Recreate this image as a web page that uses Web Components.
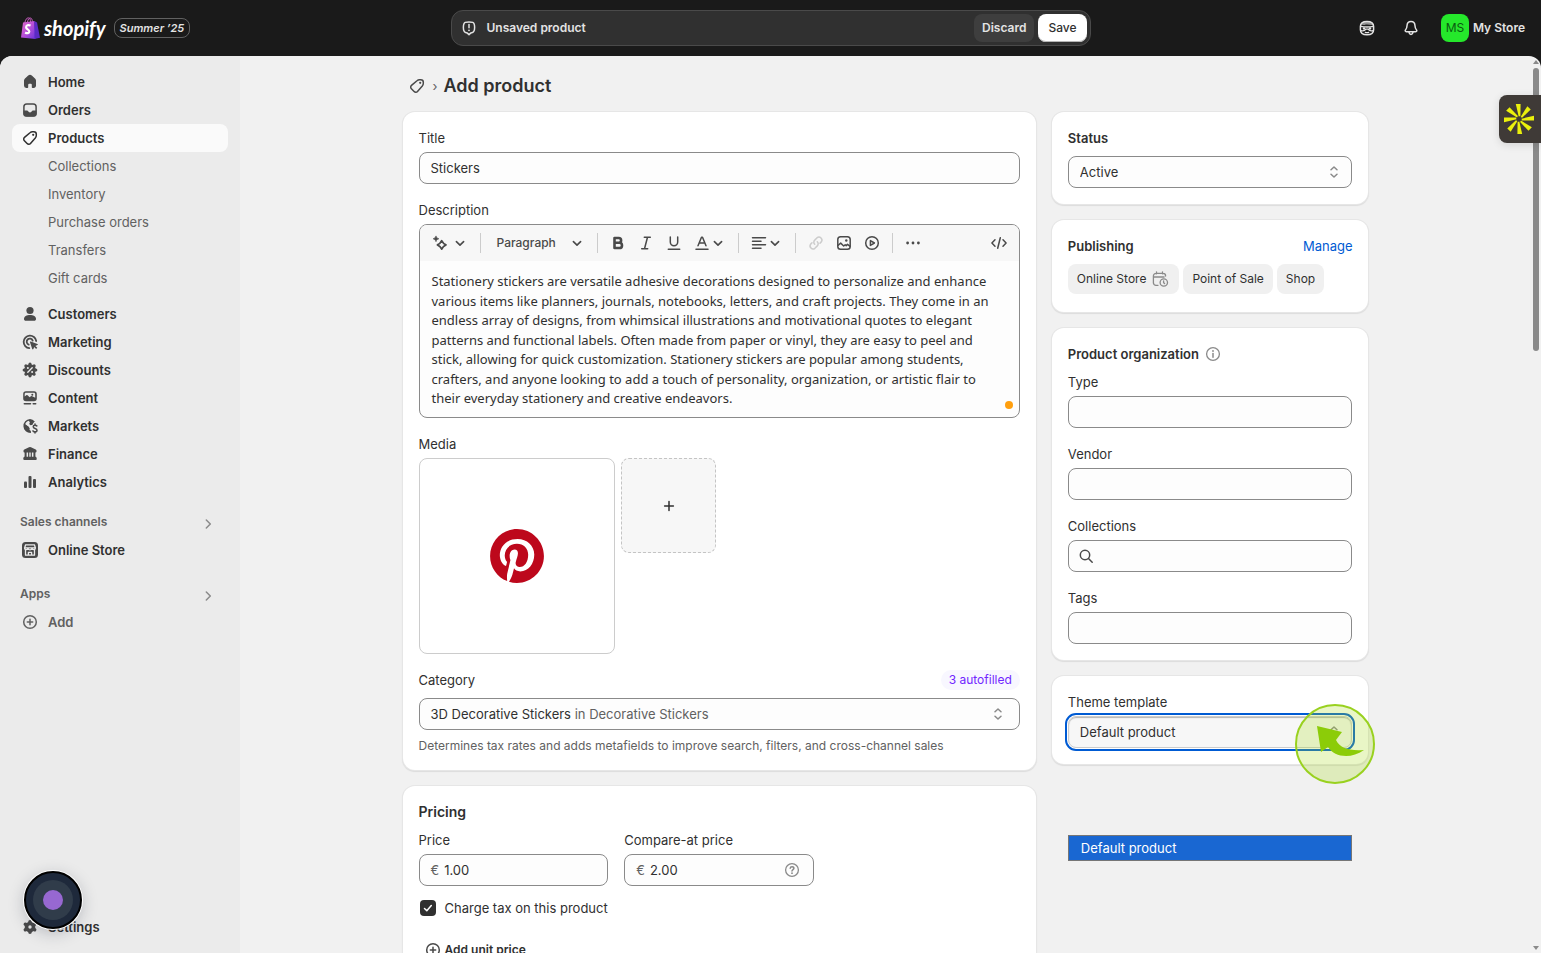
<!DOCTYPE html>
<html lang="en">
<head>
<meta charset="utf-8">
<meta name="viewport" content="width=device-width, initial-scale=1">
<title>Add product</title>
<style>
html, body {
  height: 100%;
}
body {
  margin: 0;
  overflow: hidden;
  background: #1a1a1a;
  color: #303030;
  font: 400 13px/20px Inter, "Liberation Sans", sans-serif;
}
</style>
</head>
<body>
<admin-app></admin-app>

<script>
const RESET = `
*, *::before, *::after { box-sizing: border-box; }
button, input, select, textarea { font: inherit; color: inherit; margin: 0; }
button { border: 0; padding: 0; background: none; cursor: pointer; }
a { color: inherit; text-decoration: none; }
h1, h2 { margin: 0; font: inherit; }
`

const S = 'fill="none" stroke="currentColor" stroke-width="1.5" stroke-linecap="round" stroke-linejoin="round"'
const THIN = S.replace("1.5", "1.3")

// all on a 20 x 20 grid
const ICONS = {
    home: `<path d="M8.2 3.6a2.7 2.7 0 0 1 3.6 0l3.2 2.9c.6.5 1 1.3 1 2.1v5c0 1.4-1 2.4-2.3 2.4h-1.2a.7.7 0 0 1-.7-.7v-2.6a1 1 0 0 0-1-1H9.2a1 1 0 0 0-1 1v2.6a.7.7 0 0 1-.7.7H6.3A2.3 2.3 0 0 1 4 13.6v-5c0-.8.4-1.6 1-2.1z"/>`,
    orders: `<rect x="3.9" y="3.9" width="12.2" height="12.2" rx="2.8" ${S}/><path d="M3.5 10.5h3.6c.4 0 .7.2.9.6a2.2 2.2 0 0 0 4 0c.2-.4.5-.6.9-.6h3.6v3.5a2.5 2.5 0 0 1-2.5 2.5H6A2.5 2.5 0 0 1 3.5 14z"/>`,
    tag: `<path ${S} d="M10.3 4.500c.6-.6 1.300-.8 2.100-.8h1.400c1.400 0 2.500 1.100 2.500 2.500v1.400c0 .8-.3 1.500-.8 2.100l-5 5.700a2.300 2.300 0 0 1-3.400.1L4.400 12.800a2.300 2.300 0 0 1 .1-3.400z"/><circle cx="13.2" cy="6.800" r="1.1"/>`,
    customers: `<circle cx="10" cy="6.500" r="3.600"/><path d="M4 15c0-2.500 2.700-3.900 6-3.900s6 1.400 6 3.900c0 1-.8 1.800-1.800 1.800H5.800C4.800 16.800 4 16 4 15z"/>`,
    marketing: `<g stroke-width="1.8" fill="none" stroke="currentColor" stroke-linecap="round"><path d="M16.200 9A6.300 6.300 0 1 0 9.300 16.200"/><path d="M12.700 8.600a3.100 3.100 0 1 0-4 4"/></g><path d="M10 10.300c-.2-.5.3-1 .8-.8l6.600 2.400c.6.200.6 1 0 1.200l-2 .8 1.900 1.900-1.200 1.200-1.900-1.900-.8 2c-.2.600-1 .6-1.200 0z"/>`,
    discounts: `<circle cx="10" cy="10" r="5.800"/><path fill="none" stroke="currentColor" stroke-width="3.200" stroke-linecap="round" d="M10 4.200v11.600M4.200 10h11.600M5.900 5.900l8.200 8.200M14.100 5.900l-8.200 8.200"/><path stroke="#ebebeb" stroke-width="1.400" stroke-linecap="round" d="m7.800 12.200 4.400-4.400"/><circle cx="7.900" cy="8.100" r="1" fill="#ebebeb"/><circle cx="12.100" cy="11.900" r="1" fill="#ebebeb"/>`,
    content: `<path fill-rule="evenodd" d="M6 3.200h8A2.800 2.800 0 0 1 16.800 6v4.500a2.800 2.800 0 0 1-2.800 2.800H6a2.800 2.800 0 0 1-2.800-2.800V6A2.800 2.800 0 0 1 6 3.200zm0 1.500c-.8 0-1.300.6-1.300 1.300v2.600l1.500-1.300a1 1 0 0 1 1.400 0l2 2 1.300-1.100a1 1 0 0 1 1.300 0l3 1.500V6c0-.7-.5-1.300-1.200-1.300z"/><circle cx="12.300" cy="6.700" r="1"/><path ${S} d="M4.300 15.800h6.200M13.200 15.800h2.500"/>`,
    markets: `<path d="M10 3a7 7 0 1 0 .9 14v-2.300c-1.300-.2-1.800-1.500-1.100-2.500L8.200 10.500 5.200 8.300C5.700 6.500 7 5.200 8.700 4.700l1.200 1.600-.7 1.700 1.300 1.300 2-.6.5-2.200 1.600-1A7 7 0 0 0 10 3z"/><path d="m4.500 8 4.400 3-.2 3.500-1.300 1.200-3-2.700z"/><path d="m11 4 3.700 1.200-2.300 3-2 .5z"/><path ${S} d="M16.800 9.900c-.5-.5-1.100-.7-1.800-.7-1 0-1.800.6-1.800 1.600 0 2.300 3.800 1.100 3.800 3.400 0 1-.8 1.600-1.900 1.600-.8 0-1.600-.3-2.100-.9M15 8v1M15 16v1"/>`,
    finance: `<path d="M9 3.300a2 2 0 0 1 2 0l4.700 2.200c.5.300.8.700.8 1.200v.9c0 .5-.4.900-.9.900H4.400a.9.900 0 0 1-.9-.9v-.9c0-.5.300-1 .8-1.200z"/><path d="M4.600 8h2v5.500h-2zM8.100 8h1.200v5.500H8.100zM10.700 8h1.200v5.500h-1.200zM13.400 8h2v5.500h-2z"/><path d="M4.700 12.800h10.600c.8 0 1.400.7 1.400 1.500v.7c0 .6-.4 1-1 1H4.300a1 1 0 0 1-1-1v-.7c0-.8.6-1.500 1.400-1.500z"/>`,
    analytics: `<rect x="4" y="9.500" width="3" height="6.500" rx="1"/><rect x="8.500" y="4" width="3" height="12" rx="1"/><rect x="13" y="7" width="3" height="9" rx="1"/>`,
    store: `<rect x="2" y="2" width="16" height="16" rx="3.500"/><g fill="none" stroke="#ebebeb" stroke-width="1.300" stroke-linejoin="round"><path d="M5.600 4.800h8.800l1 3.200c0 1-.7 1.700-1.600 1.700S12 9.200 12 8.300c0 .9-1 1.500-2 1.500s-2-.6-2-1.500c0 .9-.8 1.400-1.800 1.400S4.600 9 4.600 8zM5.500 9.900v5.300h9V9.900M8.400 15v-2.600h3.200V15M4.800 7.800h10.400"/></g>`,
    plusCircle: `<circle cx="10" cy="10" r="6.300" ${S}/><path ${S} d="M10 7.300v5.400M7.300 10h5.400"/>`,
    settings: `<circle cx="10" cy="10" r="3.500" fill="none" stroke="currentColor" stroke-width="3.600"/><path fill="none" stroke="currentColor" stroke-width="3.600" stroke-linecap="round" d="M10 5.800V4.700M10 14.200v1.100M6.400 7.900l-1-.6M13.600 12.100l1 .6M13.600 7.900l1-.6M6.400 12.100l-1 .6"/>`,
    chevronRight: `<path ${S} d="m8.300 6 4 4-4 4"/>`,
    chevronDown: `<path ${S} d="m5.500 8.300 4.500 4.400 4.500-4.400" style="stroke-width:2"/>`,
    updown: `<path ${S} d="M7 7.800 10 5l3 2.800M7 12.200l3 2.800 3-2.800"/>`,
    alert: `<path ${S} d="M6.200 4.400c1-.5 6.600-.5 7.600 0 2.400 1.200 2.600 9.200-.4 10.200l-1.500.3L10 16.600l-1.900-1.700-1.500-.3C3.600 13.600 3.800 5.600 6.200 4.400z"/><path ${S} d="M10 6.600v3.200"/><circle cx="10" cy="12.300" r=".9"/>`,
    sidekick: `<path ${S} d="M3.400 8.500c0-3.200 2.800-5 6.600-5s6.600 1.800 6.600 5v3.200c0 3.300-3 5-6.600 5s-6.600-1.700-6.600-5z"/><path d="M3.600 6.500C5 4 7.300 3.300 10 3.300s5 .7 6.400 3.200c-2 1.100-4.100 0-6.400 0-1.800 0-2 .5-3.300.5z" opacity=".6"/><path ${THIN} d="M3.600 8.300c4.200.9 8.600.9 12.800 0M4 12.600c2 .6 4-.2 4.800-1.500h2.400c.8 1.300 2.800 2.100 4.800 1.500M8.300 14.300c1.100.4 2.300.4 3.400 0"/><circle cx="7" cy="10.400" r="1.200"/><circle cx="13" cy="10.400" r="1.200"/>`,
    bell: `<path ${S} d="M10 3.600c-2.400 0-3.900 1.900-4 4.100-.1 2-.4 3-1.400 4-.8.9-.4 2 .7 2h9.400c1.100 0 1.500-1.100.7-2-1-1-1.300-2-1.400-4-.1-2.200-1.600-4.100-4-4.100z"/><path ${S} d="M8 14c.2 1.500.9 2.400 2 2.400s1.800-.9 2-2.400"/>`,
    magic: `<path ${S} d="M11.700 7.700c.9 2 2.200 3.300 4.300 4.200-2.100.9-3.400 2.200-4.300 4.300-.9-2.100-2.200-3.400-4.300-4.300 2.100-.9 3.400-2.200 4.300-4.200z" style="stroke-width:1.700"/><path d="M6 2.900c.4 1.600 1.200 2.400 2.900 2.900C7.200 6.300 6.400 7.100 6 8.700c-.5-1.600-1.300-2.400-2.900-2.900C4.700 5.300 5.500 4.500 6 2.900z" stroke="currentColor" stroke-width=".6" stroke-linejoin="round"/>`,
    bold: `<path fill="none" stroke="currentColor" stroke-width="2.600" stroke-linejoin="round" d="M6.500 5h4.200a2.300 2.300 0 0 1 0 4.800H6.500zM6.500 9.800h4.900a2.600 2.600 0 0 1 0 5.200H6.500z"/>`,
    italic: `<path ${S} d="M8.300 4.300h6M5.700 15.700h6M11.500 4.300l-3 11.400"/>`,
    underline: `<path ${S} d="M6.300 4v5a3.700 3.700 0 0 0 7.400 0V4M4.300 16.200h11.400"/>`,
    textColor: `<path ${S} d="m6 12.800 3.500-8.600h1l3.500 8.600M7.200 10h5.600M4 16.300h12"/>`,
    alignLeft: `<path ${S} d="M3.500 4.800h13M3.500 8.300h8.500M3.500 11.800h13M3.500 15.200h8.500"/>`,
    link: `<path ${S} d="M8.700 11.300a2.900 2.900 0 0 1 0-4.200l2.400-2.400a3 3 0 0 1 4.200 4.200l-1.300 1.300M11.300 8.700a2.900 2.900 0 0 1 0 4.200l-2.400 2.400a3 3 0 0 1-4.200-4.200L6 9.800"/>`,
    image: `<rect x="3.800" y="3.800" width="12.400" height="12.400" rx="2.800" ${S}/><path ${S} d="m4.200 12.300 2.500-2.200 3 2.900 1.500-1.300 1 .9 1.300-1.200 2.300 1.800"/><circle cx="12.300" cy="7.500" r="1.200"/>`,
    play: `<circle cx="10" cy="10" r="6.300" ${S}/><path ${S} d="M8.400 7.600v4.800l4-2.400z"/>`,
    dots: `<circle cx="4.600" cy="10" r="1.400"/><circle cx="10" cy="10" r="1.400"/><circle cx="15.400" cy="10" r="1.400"/>`,
    code: `<path ${S} d="M6 6.800 2.900 10 6 13.200M14 6.800l3.100 3.200-3.100 3.200M11.300 4.700 8.700 15.300"/>`,
    plus: `<path ${S} d="M10 5.600v8.800M5.600 10h8.800"/>`,
    schedule: `<path ${THIN} d="M8 16.300H6a2.600 2.600 0 0 1-2.600-2.600V7A2.600 2.600 0 0 1 6 4.400h7A2.600 2.600 0 0 1 15.600 7M3.600 8h10.500M6.500 2.800v2M12.500 2.800v2"/><circle cx="13.800" cy="13.500" r="3.700" ${THIN}/><path ${THIN} d="M13.600 11.800v2l1 .8"/>`,
    info: `<circle cx="10" cy="10" r="6.400" ${THIN}/><path ${S} d="M10 9.500v3.700"/><circle cx="10" cy="7" r=".9"/>`,
    help: `<circle cx="10" cy="10" r="6.400" ${THIN}/><path ${S} d="M8.200 8.300c.1-1 .8-1.600 1.800-1.600s1.900.7 1.900 1.600c0 1.300-1.700 1.400-1.900 2.700"/><circle cx="10" cy="13.200" r=".9"/>`,
    search: `<circle cx="9" cy="9" r="4.700" ${S}/><path ${S} d="m12.500 12.500 3.700 3.700"/>`
}

function define(name, css, html, setup) {
    customElements.define(name, class extends HTMLElement {
        constructor() {
            super()
            const attr = (key, fallback = "") => this.getAttribute(key) ?? fallback
            const root = this.attachShadow({ mode: "open" })
            root.innerHTML = `<style>${RESET}${css}</style>${typeof html == "function" ? html(attr) : html}`
            if(setup) {
                setup(root, this)
            }
        }
    })
}

// size is in px, default 20
define("ui-icon", `
:host { display: inline-flex; flex: none; }
svg { display: block; fill: currentColor; }
`, attr => {
    const size = attr("size", "20")
    return `<svg width="${size}" height="${size}" viewBox="0 0 20 20" aria-hidden="true">${ICONS[attr("name")]}</svg>`
})

define("brand-logo", `
:host { display: flex; margin-left: 4px; }
a { display: flex; align-items: center; gap: 4px; color: #fff; }
svg { display: block; }
.word { font: italic 700 20px/24px Lato, "Open Sans", sans-serif; }
.edition {
  margin-left: 4px;
  padding: 0 5px;
  border: 1px solid #616161;
  border-radius: 8px;
  color: #e3e3e3;
  font: italic 600 11px/18px Inter, sans-serif;
}
`, `
<a href="#">
  <svg width="20" height="24" viewBox="0 0 20 24" aria-hidden="true">
    <defs>
      <linearGradient id="bag" x1="0" y1="0" x2="1" y2="1">
        <stop offset="0" stop-color="#e06cc8"/><stop offset=".5" stop-color="#b84fd8"/><stop offset="1" stop-color="#6a35dc"/>
      </linearGradient>
    </defs>
    <path d="M4.800 7C5.300 3.600 6.700 1.900 8.300 1.900c1.700 0 2.200 1.700 2.200 4.500M7.500 6c.4-2.600 1.600-4 2.700-4 1.500 0 2.100 1.600 2.200 3.800" fill="none" stroke="#c45bbd" stroke-width="1"/>
    <path d="M3 6.500 14.500 5l1 18L1 21.500z" fill="url(#bag)"/>
    <path d="m14.300 5 2.700 1.500 3 15.300L14.500 23z" fill="#5b2bc4"/>
    <path d="M10.600 9.500c-2.500-1-4.500-.3-4.500 1.700 0 2.300 3.200 2 3.200 4.300 0 1.900-2.200 2.200-4.200 1" fill="none" stroke="#fff" stroke-width="2.200"/>
  </svg>
  <span class="word">shopify</span>
  <span class="edition">Summer ’25</span>
</a>
`)

define("save-bar", `
:host {
  display: flex;
  align-items: center;
  gap: 4px;
  height: 36px;
  padding: 0 3px 0 7px;
  border: 1px solid #4a4a4a;
  border-radius: 12px;
  background: #303030;
  color: #e3e3e3;
  font-size: 12px;
}
.text { flex: 1; margin-left: 4px; font-weight: 600; }
button { height: 28px; padding: 0 8px; border-radius: 8px; font-weight: 600; }
.discard { background: #3e3e3e; }
.save { padding: 0 10px; background: #fff; color: #303030; box-shadow: inset 0 -1px 0 #b5b5b5; font-weight: 500; }
`, `
<ui-icon name="alert"></ui-icon>
<span class="text">Unsaved product</span>
<button class="discard" type="button">Discard</button>
<button class="save" type="button">Save</button>
`)

define("top-bar", `
:host {
  display: grid;
  grid-template-columns: 1fr minmax(0, 640px) 1fr;
  align-items: center;
  height: 56px;
  padding: 0 16px;
  color: #e3e3e3;
  font-size: 12px;
}
.tools { display: flex; align-items: center; justify-content: flex-end; gap: 16px; }
.tools button { display: flex; align-items: center; justify-content: center; width: 28px; height: 28px; }
.tools button.store { width: auto; gap: 4px; font-weight: 600; }
.avatar {
  width: 28px;
  border-radius: 8px;
  background: #25e82b;
  color: #0b5a10;
  font-weight: 400;
  line-height: 28px;
}
`, `
<brand-logo></brand-logo>
<save-bar></save-bar>
<div class="tools">
  <button type="button" aria-label="Sidekick"><ui-icon name="sidekick"></ui-icon></button>
  <button type="button" aria-label="Alerts"><ui-icon name="bell"></ui-icon></button>
  <button type="button" class="store"><span class="avatar">MS</span>My Store</button>
</div>
`)

define("nav-item", `
:host { display: block; }
a {
  display: flex;
  align-items: center;
  gap: 8px;
  height: 28px;
  padding: 0 8px;
  border-radius: 8px;
  font-weight: 600;
}
ui-icon { color: #4a4a4a; }
:host([sub]) a { padding-left: 36px; color: #616161; font-weight: 400; }
:host([muted]) a, :host([muted]) ui-icon { color: #616161; }
:host([active]) a { background: #fafafa; }
:host([active]) ui-icon { color: #303030; }
`, attr => `<a href="#">${attr("icon") ? `<ui-icon name="${attr("icon")}"></ui-icon>` : ""}<slot></slot></a>`)

define("nav-section", `
:host { display: block; }
button {
  display: flex;
  align-items: center;
  justify-content: space-between;
  width: 100%;
  height: 28px;
  padding: 0 10px 0 8px;
  color: #616161;
  font-size: 12px;
  font-weight: 600;
}
ui-icon { padding-top: 4px; color: #8a8a8a; }
`, `<button type="button"><slot></slot><ui-icon name="chevronRight"></ui-icon></button>`)

define("side-nav", `
:host { display: flex; flex-direction: column; justify-content: space-between; padding: 12px; background: #ebebeb; }
nav { display: flex; flex-direction: column; }
.more { margin-top: 8px; }
.channels { margin-top: 12px; }
.apps { margin-top: 16px; }
`, `
<nav aria-label="Main">
  <nav-item icon="home">Home</nav-item>
  <nav-item icon="orders">Orders</nav-item>
  <nav-item icon="tag" active>Products</nav-item>
  <nav-item sub>Collections</nav-item>
  <nav-item sub>Inventory</nav-item>
  <nav-item sub>Purchase orders</nav-item>
  <nav-item sub>Transfers</nav-item>
  <nav-item sub>Gift cards</nav-item>
  <nav-item icon="customers" class="more">Customers</nav-item>
  <nav-item icon="marketing">Marketing</nav-item>
  <nav-item icon="discounts">Discounts</nav-item>
  <nav-item icon="content">Content</nav-item>
  <nav-item icon="markets">Markets</nav-item>
  <nav-item icon="finance">Finance</nav-item>
  <nav-item icon="analytics">Analytics</nav-item>
  <nav-section class="channels">Sales channels</nav-section>
  <nav-item icon="store">Online Store</nav-item>
  <nav-section class="apps">Apps</nav-section>
  <nav-item icon="plusCircle" muted>Add</nav-item>
</nav>
<nav-item icon="settings">Settings</nav-item>
`)

define("page-card", `
:host {
  display: flex;
  flex-direction: column;
  gap: var(--card-gap, 16px);
  padding: 16px;
  border-radius: 12px;
  background: #fff;
  box-shadow: 0 0 0 1px #e6e6e6, 0 1px 1px 1px #dcdcdc;
}
`, `<slot></slot>`)

const FIELD = `
:host { display: flex; flex-direction: column; gap: 4px; min-width: 0; }
.box {
  display: flex;
  align-items: center;
  height: 32px;
  border: 1px solid #8a8a8a;
  border-radius: 8px;
  background: #fdfdfd;
}
`

define("text-field", FIELD + `
.box { gap: 5px; padding: 0 11px; }
input { flex: 1; width: 0; height: 30px; padding: 0; border: 0; outline: 0; background: none; }
.prefix { color: #616161; }
ui-icon { color: #8a8a8a; }
ui-icon.lead { margin-left: -4px; color: #4a4a4a; }
`, attr => `
<label for="field">${attr("label")}</label>
<div class="box">
  ${attr("lead") ? `<ui-icon class="lead" name="${attr("lead")}"></ui-icon>` : ""}
  ${attr("prefix") ? `<span class="prefix">${attr("prefix")}</span>` : ""}
  <input id="field" type="text" value="${attr("value")}" autocomplete="off">
  ${attr("trail") ? `<ui-icon name="${attr("trail")}"></ui-icon>` : ""}
</div>
`)

// label is drawn as a heading when "heading" is set
define("select-field", FIELD + `
:host([heading]) { gap: 8px; }
:host([heading]) label { font-weight: 600; }
:host([open]) .box { background: #f7f7f7; border-color: #cccccc; box-shadow: inset 0 1px 1px #b5b5b5; outline: 2px solid #005bd3; outline-offset: 1px; }
.box { display: grid; }
select {
  grid-area: 1 / 1;
  width: 100%;
  height: 30px;
  padding: 0 32px 0 11px;
  border: 0;
  outline: 0;
  background: none;
  appearance: none;
}
ui-icon { grid-area: 1 / 1; justify-self: end; margin-right: 7px; color: #8a8a8a; pointer-events: none; }
`, attr => `
<label for="field">${attr("label")}</label>
<div class="box">
  <select id="field"><option>${attr("value")}</option></select>
  <ui-icon name="updown"></ui-icon>
</div>
`)

define("rich-editor", `
:host { display: flex; flex-direction: column; gap: 4px; }
.frame { position: relative; border: 1px solid #8a8a8a; border-radius: 8px; background: #fdfdfd; overflow: hidden; }
.toolbar { display: flex; align-items: center; height: 36px; padding: 0 6px; background: #f7f7f7; color: #4a4a4a; }
.toolbar button { display: flex; align-items: center; justify-content: center; height: 28px; min-width: 28px; }
.toolbar button.menu { padding: 0 6px 0 4px; }
.toolbar button.menu.wide { gap: 2px; }
.toolbar button.tight ui-icon + ui-icon { margin-left: -2px; }
.toolbar button.style { width: 104px; justify-content: space-between; padding: 0 6px 0 10px; font-size: 12px; font-weight: 550; }
.toolbar button:disabled { color: #cccccc; }
.toolbar hr { width: 1px; height: 20px; margin: 0 6px; border: 0; background: #cccccc; }
.toolbar button.source { margin-left: auto; }
textarea {
  display: block;
  width: 100%;
  height: 156px;
  padding: 11px 24px 8px 12px;
  border: 0;
  outline: 0;
  resize: none;
  overflow: hidden;
  background: none;
  font: 400 13px/1.5 "Noto Sans", sans-serif;
}
.status { position: absolute; right: 6px; bottom: 8px; width: 8px; height: 8px; border-radius: 50%; background: #ff9f0f; }
`, attr => `
<label for="body">${attr("label")}</label>
<div class="frame">
  <div class="toolbar" role="toolbar" aria-label="Formatting">
    <button type="button" class="menu wide" aria-label="Generate"><ui-icon name="magic"></ui-icon><ui-icon name="chevronDown" size="16"></ui-icon></button>
    <hr>
    <button type="button" class="style">Paragraph<ui-icon name="chevronDown" size="16"></ui-icon></button>
    <hr>
    <button type="button" aria-label="Bold"><ui-icon name="bold"></ui-icon></button>
    <button type="button" aria-label="Italic"><ui-icon name="italic"></ui-icon></button>
    <button type="button" aria-label="Underline"><ui-icon name="underline"></ui-icon></button>
    <button type="button" class="menu tight" aria-label="Text color"><ui-icon name="textColor"></ui-icon><ui-icon name="chevronDown" size="16"></ui-icon></button>
    <hr>
    <button type="button" class="menu tight" aria-label="Alignment"><ui-icon name="alignLeft"></ui-icon><ui-icon name="chevronDown" size="16"></ui-icon></button>
    <hr>
    <button type="button" aria-label="Link" disabled><ui-icon name="link"></ui-icon></button>
    <button type="button" aria-label="Image"><ui-icon name="image"></ui-icon></button>
    <button type="button" aria-label="Video"><ui-icon name="play"></ui-icon></button>
    <hr>
    <button type="button" aria-label="More"><ui-icon name="dots"></ui-icon></button>
    <button type="button" class="source" aria-label="Show HTML"><ui-icon name="code"></ui-icon></button>
  </div>
  <textarea id="body" spellcheck="false"></textarea>
  <span class="status"></span>
</div>
`, (root, host) => {
    root.querySelector("textarea").value = host.textContent.trim()
})

define("media-grid", `
:host { display: flex; flex-direction: column; gap: 4px; }
.tiles { display: grid; grid-template-columns: repeat(6, minmax(0, 1fr)); gap: 6px; }
.item, .add { display: flex; align-items: center; justify-content: center; border-radius: 8px; aspect-ratio: 1; }
.item { grid-area: span 2 / span 2; border: 1px solid #cccccc; background: #fff; }
.add { border: 1px dashed #c4c4c4; background: #f7f7f7; color: #303030; }
`, `
<span>Media</span>
<div class="tiles">
  <button type="button" class="item" aria-label="Pinterest logo">
    <svg width="54" height="54" viewBox="0 0 24 24" aria-hidden="true">
      <path fill="#bd081c" d="M12.017 0C5.396 0 .029 5.367.029 11.987c0 5.079 3.158 9.417 7.618 11.162-.105-.949-.199-2.403.041-3.439.219-.937 1.406-5.957 1.406-5.957s-.359-.72-.359-1.781c0-1.663.967-2.911 2.168-2.911 1.024 0 1.518.769 1.518 1.688 0 1.029-.653 2.567-.992 3.992-.285 1.193.6 2.165 1.775 2.165 2.128 0 3.768-2.245 3.768-5.487 0-2.861-2.063-4.869-5.008-4.869-3.41 0-5.409 2.562-5.409 5.199 0 1.033.394 2.143.889 2.741.099.12.112.225.085.345-.09.375-.293 1.199-.334 1.363-.053.225-.172.271-.401.165-1.495-.69-2.433-2.878-2.433-4.646 0-3.776 2.748-7.252 7.92-7.252 4.158 0 7.392 2.967 7.392 6.923 0 4.135-2.607 7.462-6.233 7.462-1.214 0-2.354-.629-2.758-1.379l-.749 2.848c-.269 1.045-1.004 2.352-1.498 3.146 1.123.345 2.306.535 3.55.535 6.607 0 11.985-5.365 11.985-11.987C23.97 5.39 18.592.026 11.985.026L12.017 0z"/>
    </svg>
  </button>
  <button type="button" class="add" aria-label="Add media"><ui-icon name="plus"></ui-icon></button>
</div>
`)

define("category-field", FIELD + `
.top { display: flex; justify-content: space-between; margin-bottom: 4px; }
.badge { padding: 0 8px; border-radius: 10px; background: #f8f7ff; color: #7126ff; font-size: 12px; }
.box { justify-content: space-between; width: 100%; padding: 0 11px; text-align: left; }
.box ui-icon { color: #8a8a8a; }
.parent, .help { color: #616161; }
.help { padding-top: 4px; font-size: 12px; line-height: 16px; }
`, `
<div class="top"><label for="category">Category</label><span class="badge">3 autofilled</span></div>
<button type="button" id="category" class="box">
  <span>3D Decorative Stickers <span class="parent">in Decorative Stickers</span></span>
  <ui-icon name="updown"></ui-icon>
</button>
<span class="help">Determines tax rates and adds metafields to improve search, filters, and cross-channel sales</span>
`)

define("check-box", `
:host { display: block; }
label { display: flex; align-items: center; gap: 9px; padding-left: 1px; }
.tick { display: grid; }
input { grid-area: 1 / 1; width: 16px; height: 16px; appearance: none; border-radius: 4px; background: #303030; }
svg { grid-area: 1 / 1; pointer-events: none; }
`, `
<label>
  <span class="tick">
    <input type="checkbox" checked>
    <svg width="16" height="16" viewBox="0 0 16 16" fill="none" stroke="#fff" stroke-width="1.5" stroke-linecap="round" stroke-linejoin="round" aria-hidden="true"><path d="m4.500 8.500 2.300 2.200 4.500-5.200"/></svg>
  </span>
  <slot></slot>
</label>
`)

define("pricing-card", `
:host { display: block; }
page-card { --card-gap: 8px; min-height: 260px; }
h2 { font-size: 14px; font-weight: 600; }
.prices { display: grid; grid-template-columns: repeat(3, minmax(0, 1fr)); gap: 16px; }
check-box { margin-top: 4px; }
.unit { display: flex; align-items: center; align-self: flex-start; gap: 2px; height: 28px; margin-top: 10px; padding: 0 8px 0 4px; font-size: 12px; font-weight: 600; }
.unit ui-icon { color: #4a4a4a; }
`, `
<page-card>
  <h2>Pricing</h2>
  <div class="prices">
    <text-field label="Price" prefix="€" value="1.00"></text-field>
    <text-field label="Compare-at price" prefix="€" value="2.00" trail="help"></text-field>
  </div>
  <check-box>Charge tax on this product</check-box>
  <button type="button" class="unit"><ui-icon name="plusCircle"></ui-icon>Add unit price</button>
</page-card>
`)

define("publishing-card", `
:host { display: block; }
page-card { --card-gap: 8px; }
.top { display: flex; justify-content: space-between; }
h2 { font-weight: 600; }
a { color: #005bd3; }
.chips { display: flex; gap: 4px; padding-bottom: 2px; }
.chip { display: flex; align-items: center; gap: 4px; height: 30px; padding: 0 9px; border-radius: 8px; background: #f0f0f0; font-size: 12px; }
.chip ui-icon { color: #8a8a8a; }
`, `
<page-card>
  <div class="top"><h2>Publishing</h2><a href="#">Manage</a></div>
  <div class="chips">
    <span class="chip">Online Store <ui-icon name="schedule"></ui-icon></span>
    <span class="chip">Point of Sale</span>
    <span class="chip">Shop</span>
  </div>
</page-card>
`)

define("organization-card", `
:host { display: block; }
.head { display: flex; align-items: center; gap: 4px; margin-bottom: -8px; }
h2 { font-weight: 600; }
ui-icon { color: #8a8a8a; }
`, `
<page-card>
  <div class="head"><h2>Product organization</h2><ui-icon name="info"></ui-icon></div>
  <text-field label="Type"></text-field>
  <text-field label="Vendor"></text-field>
  <text-field label="Collections" lead="search"></text-field>
  <text-field label="Tags"></text-field>
</page-card>
`)

// the open list and the click marker float over the card and the page below it
define("template-card", `
:host { display: block; position: relative; }
.list {
  position: absolute;
  top: 159px;
  left: 16px;
  right: 16px;
  margin: 0;
  padding: 2px 12px;
  border: 1px solid #767676;
  background: #1967d2;
  color: #fff;
  list-style: none;
}
.click { position: absolute; right: -7px; top: 28px; pointer-events: none; }
`, `
<page-card>
  <select-field open label="Theme template" value="Default product"></select-field>
</page-card>
<ul class="list" role="listbox" aria-label="Theme template"><li role="option" aria-selected="true">Default product</li></ul>
<svg class="click" width="80" height="80" viewBox="0 0 80 80" aria-hidden="true">
  <circle cx="40" cy="40" r="39" fill="#a6dc1a" fill-opacity=".25" stroke="#99d11f" stroke-width="2"/>
  <path fill="#8ccc08" d="m22 22 25 6-6 8c4 8 12 11 28 10-6 4-12 6-18 6-8 0-14-3-18-9l-7 5z"/>
</svg>
`)

define("page-scrollbar", `
:host { display: flex; flex-direction: column; align-items: center; width: 10px; padding: 4px 0 3px; }
svg { display: block; flex: none; }
.track { flex: 1; width: 6px; margin: 4px 0; }
.thumb { height: 32.4%; border-radius: 3px; background: #8a8a8a; }
`, `
<svg width="6" height="4" viewBox="0 0 6 4" aria-hidden="true"><path d="M3 0 6 4H0z" fill="#8a8a8a"/></svg>
<div class="track"><div class="thumb"></div></div>
<svg width="6" height="4" viewBox="0 0 6 4" aria-hidden="true"><path d="M3 4 0 0h6z" fill="#8a8a8a"/></svg>
`)

define("product-page", `
:host { display: block; overflow: auto; scrollbar-width: none; }
.page { max-width: 998px; margin: 0 auto; padding: 16px 16px 0; }
.crumbs { display: flex; align-items: center; height: 28px; padding-left: 4px; margin-bottom: 12px; }
.crumbs a { display: flex; color: #4a4a4a; }
.crumbs span { padding: 0 6px; color: #616161; }
h1 { font-size: 18px; font-weight: 600; line-height: 28px; }
.columns { display: grid; grid-template-columns: 2fr 1fr; gap: 16px; align-items: start; }
.column { display: flex; flex-direction: column; gap: 16px; min-width: 0; }
`, `
<div class="page">
  <div class="crumbs"><a href="#" aria-label="Products"><ui-icon name="tag"></ui-icon></a><span>›</span><h1>Add product</h1></div>
  <div class="columns">
    <div class="column">
      <page-card>
        <text-field label="Title" value="Stickers"></text-field>
        <rich-editor label="Description">Stationery stickers are versatile adhesive decorations designed to personalize and enhance various items like planners, journals, notebooks, letters, and craft projects. They come in an endless array of designs, from whimsical illustrations and motivational quotes to elegant patterns and functional labels. Often made from paper or vinyl, they are easy to peel and stick, allowing for quick customization. Stationery stickers are popular among students, crafters, and anyone looking to add a touch of personality, organization, or artistic flair to their everyday stationery and creative endeavors.</rich-editor>
        <media-grid></media-grid>
        <category-field></category-field>
      </page-card>
      <pricing-card></pricing-card>
    </div>
    <div class="column">
      <page-card><select-field heading label="Status" value="Active"></select-field></page-card>
      <publishing-card></publishing-card>
      <organization-card></organization-card>
      <template-card></template-card>
    </div>
  </div>
</div>
`)

// two small widgets that float over the admin: a side tab and a recorder bubble
define("spark-tab", `
:host { position: absolute; right: 0; top: 95px; }
button { display: flex; align-items: center; padding: 0 6px 0 4px; width: 42px; height: 48px; border-radius: 8px 0 0 8px; background: #3f3a37; box-shadow: 0 2px 8px rgba(0, 0, 0, .12); }
`, () => {
    let rays = ""
    for(let i = 0; i < 8; i++) {
        rays += `<path d="M-.3-2.500-3.200-15h4.800L1.400-3z" transform="rotate(${i * 45})"/>`
    }
    return `<button type="button" aria-label="Open assistant"><svg width="32" height="32" viewBox="-16 -16 32 32" fill="#eaf00c" aria-hidden="true">${rays}</svg></button>`
})

define("recorder-bubble", `
:host { position: absolute; left: 24px; bottom: 24px; }
button {
  display: grid;
  place-items: center;
  width: 58px;
  height: 58px;
  border: 2px solid #000;
  border-radius: 50%;
  background: #1e293b;
  box-shadow: 0 0 0 1px #fff, 0 4px 16px rgba(30, 41, 59, .25);
}
span { display: grid; place-items: center; width: 40px; height: 40px; border-radius: 50%; background: #303c4a; }
span::after { content: ""; width: 20px; height: 20px; border-radius: 50%; background: #9768d1; }
`, `<button type="button" aria-label="Stop recording"><span></span></button>`)

define("admin-app", `
:host { display: grid; grid-template-rows: auto minmax(0, 1fr); height: 100vh; position: relative; overflow: hidden; }
.frame {
  display: grid;
  grid-template-columns: 240px minmax(0, 1fr) auto;
  border-radius: 12px 12px 0 0;
  background: #f1f1f1;
  overflow: hidden;
}
`, `
<top-bar></top-bar>
<div class="frame">
  <side-nav></side-nav>
  <product-page></product-page>
  <page-scrollbar></page-scrollbar>
</div>
<spark-tab></spark-tab>
<recorder-bubble></recorder-bubble>
`)
</script>
</body>
</html>
